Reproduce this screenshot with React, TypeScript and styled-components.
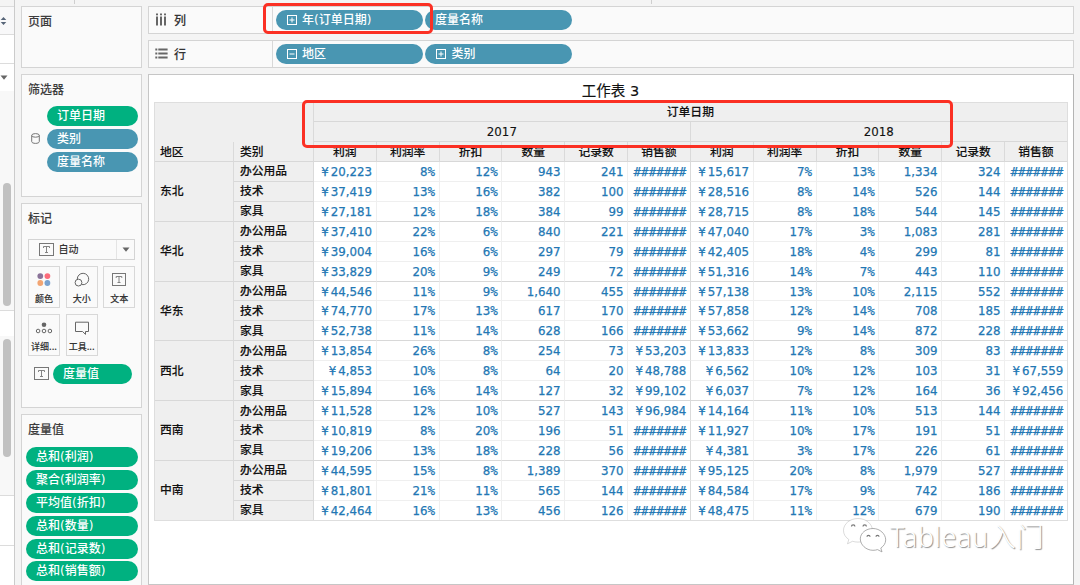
import React from 'react';
import styled, { createGlobalStyle } from 'styled-components';

const cjk = '"Noto Sans CJK SC"';
const mixed = `"DejaVu Sans", ${cjk}, sans-serif`;
const GREEN = '#00b180';
const BLUE = '#4996b2';

const GlobalStyle = createGlobalStyle`
  * { box-sizing: border-box; }
  body {
    margin: 0;
    background: #f4f4f4;
    font-family: ${mixed};
    font-size: 12px;
    color: #333;
  }
  svg { display: block; flex: none; }
`;

const Workbook = styled.div`
  position: relative;
  width: 1080px;
  height: 585px;
  overflow: hidden;
  display: flex;
`;

/* data pane edge */
const Rail = styled.div`
  width: 15px;
  border-right: 1px solid #cbcbcb;
  padding-top: 6px;
  display: flex;
  flex-direction: column;
  flex: none;
`;
const RailBox = styled.div<{ $h: number; $bg?: string; $line?: boolean }>`
  height: ${p => p.$h}px;
  flex: none;
  background: ${p => p.$bg ?? '#fff'};
  border-top: ${p => (p.$line ? '1px solid #dcdcdc' : 'none')};
  display: flex;
  align-items: center;
`;
const Track = styled(RailBox)<{ $pad: number }>`
  align-items: flex-start;
  padding: ${p => p.$pad}px 0 0 3px;
`;
const Thumb = styled.div<{ $h: number }>`
  width: 8px;
  height: ${p => p.$h}px;
  border-radius: 4px;
  background: #c1c1c1;
`;

const Cards = styled.div`
  width: 121px;
  margin: 6px 0 0 6px;
  display: flex;
  flex-direction: column;
  gap: 6px;
  flex: none;
`;
const Card = styled.section<{ $h: number }>`
  height: ${p => p.$h}px;
  flex: none;
  background: #fafafa;
  border: 1px solid #d4d4d4;
  display: flex;
  flex-direction: column;
  overflow: hidden;
`;
const CardTitle = styled.h2<{ $gap?: number }>`
  margin: 5px 0 ${p => (p.$gap ?? 0) + 1}px 6px;
  height: 18px;
  font: 500 12px/18px ${cjk}, sans-serif;
  -webkit-text-stroke: 0.1px;
  color: #3d3d3d;
`;
const PillList = styled.div<{ $left: number }>`
  display: flex;
  flex-direction: column;
  gap: 2.9px;
  margin-left: ${p => p.$left}px;
`;
const FilterRow = styled.div`
  display: flex;
  align-items: center;
`;
const FilterGutter = styled.div`
  width: 25px;
  padding-left: 9px;
`;
const Pill = styled.div<{ $w: number; $color: string; $pad?: number }>`
  width: ${p => p.$w}px;
  height: 20px;
  border-radius: 10px;
  background: ${p => p.$color};
  color: #fff;
  padding-left: ${p => p.$pad ?? 10}px;
  display: flex;
  align-items: center;
  gap: 5.500px;
  flex: none;
  white-space: nowrap;
  font: 500 12px/18px ${mixed};
`;
const PillText = styled.span`
  height: 18px;
`;

const MarkType = styled.div`
  margin-left: 6px;
  width: 107px;
  height: 21px;
  border: 1px solid #d4d4d4;
  display: flex;
  align-items: center;
  padding-left: 9.500px;
  gap: 5px;
  font: 500 10px/18px ${cjk}, sans-serif;
`;
const MarkName = styled.span`
  height: 19px;
`;
const MarkArrow = styled.div`
  margin-left: auto;
  width: 18px;
  height: 19px;
  border-left: 1px solid #e4e4e4;
  display: flex;
  align-items: center;
  justify-content: center;
`;
const MarkGrid = styled.div`
  margin: 6px 0 0 6px;
  display: grid;
  grid-template-columns: repeat(3, 32px);
  gap: 5.7px;
`;
const MarkButton = styled.div`
  height: 42px;
  border: 1px solid #d8d8d8;
  display: flex;
  flex-direction: column;
  align-items: center;
  padding-top: 4px;
  gap: 3px;
  font: 500 9px/14px ${cjk}, sans-serif;
  -webkit-text-stroke: 0.1px;
  white-space: nowrap;
`;
const MarkRow = styled.div`
  display: flex;
  align-items: center;
  gap: 4px;
  margin: 8px 0 0 12px;
`;

const Main = styled.main`
  width: 926px;
  margin: 6px 0 0 6px;
  display: flex;
  flex-direction: column;
  gap: 6px;
  flex: none;
`;
const Shelf = styled.div`
  height: 28px;
  background: #fafafa;
  border: 1px solid #d4d4d4;
  display: flex;
  align-items: center;
`;
const ShelfLabel = styled.div`
  width: 124px;
  height: 26px;
  padding: 0 0 1px 6px;
  border-right: 1px solid #d8d8d8;
  display: flex;
  align-items: center;
  gap: 6px;
  margin-right: 2.5px;
  font: 500 12px/20px ${cjk}, sans-serif;
  -webkit-text-stroke: 0.1px;
`;
const ShelfPills = styled.div`
  display: flex;
  gap: 2.4px;
`;

const Sheet = styled.section`
  height: 530px;
  background: #fff;
  border: 1px solid #c6c6c6;
  border-right-color: #b4b4b4;
  padding-left: 5px;
`;
const SheetTitle = styled.h1`
  margin: 0;
  width: 913px;
  height: 27px;
  padding-top: 6px;
  font: 400 14.500px/20px ${mixed};
  -webkit-text-stroke: 0.15px;
  text-align: center;
  color: #111;
`;
const Crosstab = styled.div`
  width: 914px;
  display: grid;
  grid-template-columns: 79.9px 80px repeat(12, 62.83px);
  grid-template-rows: repeat(3, 20px) repeat(18, 19.93px);
  background: #fff;
  outline: 1px solid #dedede;
  outline-offset: -1px;
`;
const Head = styled.div<{ $col: string; $row: string; $left?: boolean; $corner?: boolean }>`
  grid-column: ${p => p.$col};
  grid-row: ${p => p.$row};
  background: #efefef;
  border-right: 1px solid #dadada;
  border-bottom: ${p => (p.$corner ? 'none' : '1px solid #d8d8d8')};
  color: #111;
  display: flex;
  align-items: center;
  justify-content: ${p => (p.$left ? 'flex-start' : 'center')};
  padding-left: ${p => (p.$left ? 6 : 0)}px;
  font: 500 11.8px/18px ${mixed};
  -webkit-text-stroke: 0.12px;
  white-space: nowrap;
`;
const Cell = styled.div<{ $last: boolean; $edge: boolean }>`
  border-right: 1px solid ${p => (p.$edge ? '#dadada' : '#efefef')};
  border-bottom: 1px solid ${p => (p.$last ? '#d8d8d8' : '#efefef')};
  padding: 1px 3.600px 0 0;
  color: #2277b4;
  display: flex;
  align-items: center;
  justify-content: flex-end;
  font: 11.8px/18px "DejaVu Sans", sans-serif;
  -webkit-text-stroke: 0.25px;
`;
const Yen = styled.span`
  margin-right: 2px;
`;
const Mono = styled.span`
  font-family: "DejaVu Sans Mono", monospace;
  font-size: 12.5px;
`;

const Highlight = styled.div<{ $x: number; $y: number; $w: number; $h: number }>`
  position: absolute;
  left: ${p => p.$x}px;
  top: ${p => p.$y}px;
  width: ${p => p.$w}px;
  height: ${p => p.$h}px;
  border: 3px solid #fb3024;
  border-radius: 5px;
`;
const Watermark = styled.div`
  position: absolute;
  left: 842px;
  top: 517px;
  display: flex;
  align-items: center;
  gap: 2px;
  color: #fff;
  font: 300 27px/40px "Noto Sans", ${cjk}, sans-serif;
  letter-spacing: 0.6px;
  white-space: nowrap;
  text-shadow: 1px 1px 1px #8c8c8c;
`;
const Ticks = styled.div`
  position: absolute;
  left: 74px;
  top: 0;
  width: 578px;
  height: 4px;
  display: flex;
  justify-content: space-between;
`;
const Tick = styled.i`
  width: 1px;
  background: #cfcfcf;
`;

const TextIcon = () => (
  <svg width="15" height="13" viewBox="0 0 15 13" fill="none" stroke="#777">
    <rect x="0.5" y="0.5" width="14" height="12" />
    <path d="M4.5 5V3.5h6V5M7.5 3.5v6M6 9.5h3" strokeWidth="0.9" />
  </svg>
);
const Caret = () => (
  <svg width="8" height="5" viewBox="0 0 8 5"><path d="M0.5 0.5h7L4 4.7z" fill="#666" /></svg>
);
const Expander = ({ open }: { open?: boolean }) => (
  <svg width="10" height="10" viewBox="0 0 10 10" fill="none" stroke="#fff">
    <rect x="0.5" y="0.5" width="9" height="9" />
    <path d={open ? 'M2.5 5h5' : 'M2.5 5h5M5 2.5v5'} />
  </svg>
);
const ColorIcon = () => (
  <svg width="18" height="18" viewBox="0 0 18 18">
    <circle cx="5.3" cy="5.1" r="2.9" fill="#8a7399" />
    <circle cx="12.4" cy="5.1" r="2.9" fill="#fb6b7b" />
    <circle cx="5.3" cy="12" r="2.9" fill="#f2a573" />
    <circle cx="12.4" cy="12" r="2.9" fill="#7aa2cf" />
  </svg>
);
const SizeIcon = () => (
  <svg width="18" height="18" viewBox="0 0 18 18" fill="none" stroke="#666">
    <path d="M4.300 8.300A5.700 5.700 0 1 1 8.900 13.600" />
    <circle cx="5.500" cy="11.600" r="3.400" />
  </svg>
);
const LabelIcon = () => (
  <svg width="18" height="18" viewBox="0 0 18 18" fill="none" stroke="#777">
    <rect x="2.500" y="2.500" width="13" height="12" />
    <path d="M6.200 7V5.500h5.600V7M9 5.500v6M7.500 11.500h3" strokeWidth="0.9" />
  </svg>
);
const DetailIcon = () => (
  <svg width="18" height="18" viewBox="0 0 18 18" fill="none" stroke="#666">
    <circle cx="9" cy="5.8" r="2.3" fill="#666" stroke="none" />
    <circle cx="3.1" cy="12" r="1.8" />
    <circle cx="9" cy="12" r="1.8" />
    <circle cx="14.900" cy="12" r="1.8" />
  </svg>
);
const TooltipIcon = () => (
  <svg width="18" height="18" viewBox="0 0 18 18" fill="none" stroke="#666">
    <path d="M2.500 3.200h13v9.300h-3v2.900l-3-2.900h-7z" />
  </svg>
);
const ColumnsIcon = () => (
  <svg width="13" height="13" viewBox="0 0 13 13" fill="#666">
    {[1, 5, 9].map(x => (
      <g key={x}>
        <rect x={x} y="0.500" width="2" height="1.800" />
        <rect x={x} y="3.500" width="2" height="9" />
      </g>
    ))}
  </svg>
);
const RowsIcon = () => (
  <svg width="13" height="13" viewBox="0 0 13 13" fill="#666">
    {[1.5, 5.5, 9.5].map(y => (
      <g key={y}>
        <rect x="0.3" y={y} width="2" height="2" />
        <rect x="3.3" y={y} width="9.300" height="2" />
      </g>
    ))}
  </svg>
);
const Cylinder = () => (
  <svg width="9" height="11" viewBox="0 0 9 11" fill="none" stroke="#777">
    <ellipse cx="4.5" cy="2.4" rx="3.8" ry="1.8" />
    <path d="M0.7 2.4v6.2c0 1 1.7 1.8 3.8 1.8s3.8-.8 3.8-1.8V2.4" />
  </svg>
);
const Chat = () => (
  <svg width="46" height="40" viewBox="0 0 46 40" fill="#fff" stroke="#999" strokeWidth="0.8">
    <path d="M16 1.500C8 1.500 1.500 6.800 1.500 13.500c0 3.700 2 6.800 5.300 9l-1.300 4.300 5-2.500c1.700.5 3.500.8 5.500.8 8 0 14.500-5.200 14.500-11.600S24 1.500 16 1.500z" strokeOpacity="0.45" />
    <path d="M31 11.500c-7 0-12.700 4.600-12.700 10.400S24 33.300 31 33.300c1.600 0 3.100-.2 4.500-.7l4.500 2.300-1.200-3.900c3-1.900 4.900-4.800 4.900-8.100 0-5.800-5.700-11.400-12.700-11.400z" />
    <g fill="none" stroke="#777" strokeWidth="1.200">
      <path d="M9.500 9.500a1.700 1.700 0 0 1 3.400 0M21 9.500a1.700 1.700 0 0 1 3.400 0M25 19.800a1.500 1.500 0 0 1 3 0M34 19.800a1.500 1.500 0 0 1 3 0" />
    </g>
  </svg>
);

const regions = ['东北', '华北', '华东', '西北', '西南', '中南'];
const categories = ['办公用品', '技术', '家具'];
const measures = ['利润', '利润率', '折扣', '数量', '记录数', '销售额'];
const H = '#######';
const rows: string[] = [
  `¥20,223 8% 12% 943 241 ${H} ¥15,617 7% 13% 1,334 324 ${H}`,
  `¥37,419 13% 16% 382 100 ${H} ¥28,516 8% 14% 526 144 ${H}`,
  `¥27,181 12% 18% 384 99 ${H} ¥28,715 8% 18% 544 145 ${H}`,
  `¥37,410 22% 6% 840 221 ${H} ¥47,040 17% 3% 1,083 281 ${H}`,
  `¥39,004 16% 6% 297 79 ${H} ¥42,405 18% 4% 299 81 ${H}`,
  `¥33,829 20% 9% 249 72 ${H} ¥51,316 14% 7% 443 110 ${H}`,
  `¥44,546 11% 9% 1,640 455 ${H} ¥57,138 13% 10% 2,115 552 ${H}`,
  `¥74,770 17% 13% 617 170 ${H} ¥57,858 12% 14% 708 185 ${H}`,
  `¥52,738 11% 14% 628 166 ${H} ¥53,662 9% 14% 872 228 ${H}`,
  `¥13,854 26% 8% 254 73 ¥53,203 ¥13,833 12% 8% 309 83 ${H}`,
  `¥4,853 10% 8% 64 20 ¥48,788 ¥6,562 10% 12% 103 31 ¥67,559`,
  `¥15,894 16% 14% 127 32 ¥99,102 ¥6,037 7% 12% 164 36 ¥92,456`,
  `¥11,528 12% 10% 527 143 ¥96,984 ¥14,164 11% 10% 513 144 ${H}`,
  `¥10,819 8% 20% 196 51 ${H} ¥11,927 10% 17% 191 51 ${H}`,
  `¥19,206 13% 18% 228 56 ${H} ¥4,381 3% 17% 226 61 ${H}`,
  `¥44,595 15% 8% 1,389 370 ${H} ¥95,125 20% 8% 1,979 527 ${H}`,
  `¥81,801 21% 11% 565 144 ${H} ¥84,584 17% 9% 742 186 ${H}`,
  `¥42,464 16% 13% 456 126 ${H} ¥48,475 11% 12% 679 190 ${H}`,
];

const Value = ({ text }: { text: string }) => {
  if (text === H) return <Mono>{text}</Mono>;
  if (text.startsWith('¥')) return <><Yen>¥</Yen>{text.slice(1)}</>;
  if (text.endsWith('%')) return <>{text.slice(0, -1)}<Mono>%</Mono></>;
  return <>{text}</>;
};

export default function App() {
  return (
    <Workbook>
      <GlobalStyle />
      <Rail>
        <RailBox $h={28} $bg="#f8f8f9" $line>
          <svg width="8" height="10" viewBox="0 0 8 10" fill="#566478"><path d="M0.700 4L3.500 1l2.800 3zM0.700 6l2.800 3 2.800-3z" /></svg>
        </RailBox>
        <RailBox $h={29} $line />
        <RailBox $h={28} $line><Caret /></RailBox>
        <Track $h={219} $bg="#f8f8f8" $pad={92}><Thumb $h={123} /></Track>
        <RailBox $h={26} $line />
        <Track $h={159} $bg="#f8f8f8" $pad={3}><Thumb $h={118} /></Track>
        <RailBox $h={50} $line />
        <RailBox $h={40} $line />
      </Rail>

      <Cards>
        <Card $h={62}><CardTitle>页面</CardTitle></Card>
        <Card $h={123}>
          <CardTitle $gap={7}>筛选器</CardTitle>
          <PillList $left={0}>
            <FilterRow><FilterGutter /><Pill $w={90.5} $color={GREEN}><PillText>订单日期</PillText></Pill></FilterRow>
            <FilterRow><FilterGutter><Cylinder /></FilterGutter><Pill $w={90.5} $color={BLUE}><PillText>类别</PillText></Pill></FilterRow>
            <FilterRow><FilterGutter /><Pill $w={90.5} $color={BLUE}><PillText>度量名称</PillText></Pill></FilterRow>
          </PillList>
        </Card>
        <Card $h={205}>
          <CardTitle $gap={11}>标记</CardTitle>
          <MarkType><TextIcon /><MarkName>自动</MarkName><MarkArrow><Caret /></MarkArrow></MarkType>
          <MarkGrid>
            <MarkButton><ColorIcon />颜色</MarkButton>
            <MarkButton><SizeIcon />大小</MarkButton>
            <MarkButton><LabelIcon />文本</MarkButton>
            <MarkButton><DetailIcon />详细...</MarkButton>
            <MarkButton><TooltipIcon />工具...</MarkButton>
          </MarkGrid>
          <MarkRow><TextIcon /><Pill $w={78.5} $color={GREEN}><PillText>度量值</PillText></Pill></MarkRow>
        </Card>
        <Card $h={180}>
          <CardTitle $gap={8}>度量值</CardTitle>
          <PillList $left={4}>
            {['总和(利润)', '聚合(利润率)', '平均值(折扣)', '总和(数量)', '总和(记录数)', '总和(销售额)'].map(t => (
              <Pill key={t} $w={111.5} $color={GREEN}><PillText>{t}</PillText></Pill>
            ))}
          </PillList>
        </Card>
      </Cards>

      <Main>
        <Shelf>
          <ShelfLabel><ColumnsIcon />列</ShelfLabel>
          <ShelfPills>
            <Pill $w={147} $color={BLUE} $pad={11}><Expander /><PillText>年(订单日期)</PillText></Pill>
            <Pill $w={147} $color={BLUE}><PillText>度量名称</PillText></Pill>
          </ShelfPills>
        </Shelf>
        <Shelf>
          <ShelfLabel><RowsIcon />行</ShelfLabel>
          <ShelfPills>
            <Pill $w={147} $color={BLUE} $pad={11}><Expander open /><PillText>地区</PillText></Pill>
            <Pill $w={147} $color={BLUE} $pad={11}><Expander /><PillText>类别</PillText></Pill>
          </ShelfPills>
        </Shelf>
        <Sheet>
          <SheetTitle>工作表 3</SheetTitle>
          <Crosstab>
            <Head $col="1 / 3" $row="1 / 3" $corner />
            <Head $col="3 / 15" $row="1">订单日期</Head>
            <Head $col="3 / 9" $row="2">2017</Head>
            <Head $col="9 / 15" $row="2">2018</Head>
            <Head $col="1" $row="3" $left>地区</Head>
            <Head $col="2" $row="3" $left>类别</Head>
            {[0, 6].map(o => measures.map((m, i) => (
              <Head key={`${o}${m}`} $col={`${3 + o + i}`} $row="3">{m}</Head>
            )))}
            {rows.map((r, ri) => (
              <React.Fragment key={ri}>
                {ri % 3 === 0 && <Head $col="1" $row={`${ri + 4} / ${ri + 7}`} $left>{regions[ri / 3]}</Head>}
                <Head $col="2" $row={`${ri + 4}`} $left>{categories[ri % 3]}</Head>
                {r.split(' ').map((v, ci) => (
                  <Cell key={ci} $last={ri % 3 === 2} $edge={ci % 6 === 5}><Value text={v} /></Cell>
                ))}
              </React.Fragment>
            ))}
          </Crosstab>
        </Sheet>
      </Main>

      <Ticks><Tick /><Tick /></Ticks>
      <Highlight $x={263} $y={3} $w={170} $h={31} />
      <Highlight $x={302} $y={100} $w={651} $h={48} />
      <Watermark><Chat />Tableau入门</Watermark>
    </Workbook>
  );
}
